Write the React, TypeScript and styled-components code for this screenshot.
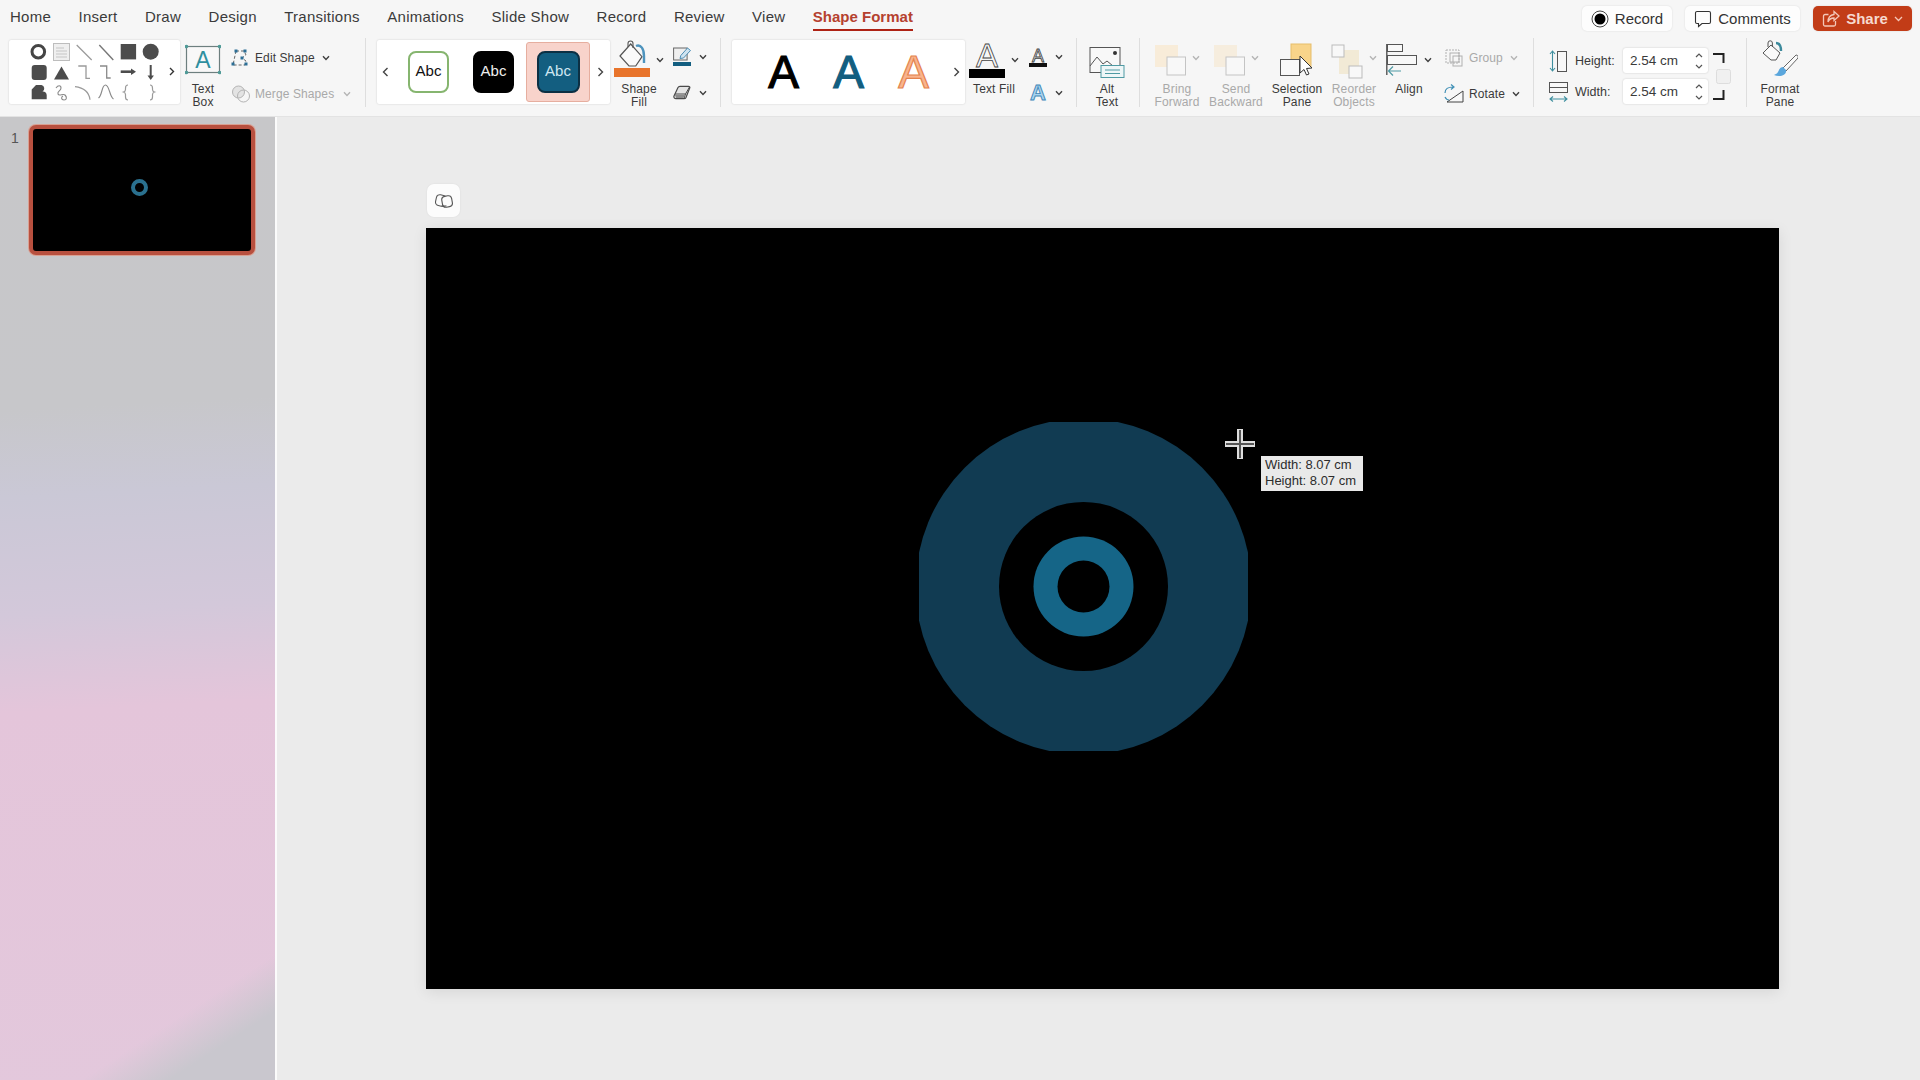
import React from 'react';
import styled, { createGlobalStyle } from 'styled-components';

const GlobalStyle = createGlobalStyle`
  html, body {
    margin: 0;
    padding: 0;
    background: #ebebeb;
  }
  body {
    font-family: "Liberation Sans", Arial, sans-serif;
    color: #3a3a3a;
  }
`;

const Page = styled.div`
  width: 1920px;
  height: 1080px;
  display: flex;
  flex-direction: column;
  overflow: hidden;
`;

const Ribbon = styled.header`
  height: 116px;
  flex: none;
  background: #f6f6f6;
  border-bottom: 1px solid #e3e3e3;
`;

const TopBar = styled.div`
  height: 36px;
  display: flex;
  align-items: flex-start;
  padding: 0 8px 0 10px;
`;

const Tabs = styled.nav`
  display: flex;
  gap: 27.5px;
`;

const Tab = styled.div<{ $active?: boolean }>`
  padding: 8px 0 4px;
  line-height: 17px;
  font-size: 15px;
  letter-spacing: ${p => (p.$active ? 0 : 0.25)}px;
  font-weight: ${p => (p.$active ? 700 : 400)};
  color: ${p => (p.$active ? '#b5412f' : '#3b3b3b')};
  border-bottom: 2px solid ${p => (p.$active ? '#ae2214' : 'transparent')};
`;

const TopActions = styled.div`
  margin-left: auto;
  margin-top: 6px;
  display: flex;
  gap: 13px;
`;

const ActionButton = styled.div<{ $width: number; $primary?: boolean }>`
  width: ${p => p.$width}px;
  height: 25px;
  box-sizing: border-box;
  display: flex;
  align-items: center;
  justify-content: center;
  gap: 6px;
  font-size: 15px;
  border-radius: 5px;
  color: ${p => (p.$primary ? '#f6d9cf' : '#333')};
  background: ${p => (p.$primary ? '#c23c17' : '#fdfdfd')};
  box-shadow: 0 0 2px rgba(0, 0, 0, 0.12);
`;

const Strip = styled.div`
  height: 80px;
  display: flex;
  align-items: flex-start;
  padding: 4px 0 0 9px;
`;

const Gallery = styled.div<{ $width: number; $left?: number }>`
  width: ${p => p.$width}px;
  height: 64px;
  flex: none;
  display: flex;
  align-items: center;
  margin-left: ${p => p.$left ?? 0}px;
  background: #fff;
  border-radius: 2px;
  box-shadow: 0 0 2px rgba(0, 0, 0, 0.18);
`;

const Divider = styled.div<{ $left: number }>`
  width: 1px;
  height: 69px;
  flex: none;
  margin: -2px 0 0 ${p => p.$left}px;
  background: #dedede;
`;

const BigTool = styled.div<{ $width: number; $left?: number }>`
  width: ${p => p.$width}px;
  flex: none;
  margin-left: ${p => p.$left ?? 0}px;
  display: flex;
  flex-direction: column;
  align-items: center;
`;

const BigIconRow = styled.div`
  height: 43px;
  display: flex;
  align-items: flex-start;
  gap: 6px;
`;

const ToolLabel = styled.div<{ $off?: boolean }>`
  font-size: 12px;
  line-height: 13px;
  letter-spacing: 0.15px;
  text-align: center;
  white-space: nowrap;
  color: ${p => (p.$off ? '#a9a9a9' : '#3a3a3a')};
`;

const SmallColumn = styled.div<{ $width: number; $left: number; $top?: number }>`
  width: ${p => p.$width}px;
  flex: none;
  margin: ${p => p.$top ?? 0}px 0 0 ${p => p.$left}px;
  display: flex;
  flex-direction: column;
  gap: 2px;
`;

const SmallRow = styled.div<{ $gap?: number; $off?: boolean }>`
  height: 34px;
  display: flex;
  align-items: center;
  gap: ${p => p.$gap ?? 8}px;
  font-size: 12px;
  letter-spacing: 0.1px;
  white-space: nowrap;
  color: ${p => (p.$off ? '#a9a9a9' : '#3a3a3a')};
`;

const ChevronMark = styled.svg<{ $top?: number; $left?: number }>`
  flex: none;
  margin-top: ${p => p.$top ?? 0}px;
  margin-left: ${p => p.$left ?? 0}px;
`;

const NavGlyph = styled.div<{ $width: number }>`
  width: ${p => p.$width}px;
  flex: none;
  display: flex;
  justify-content: center;
`;

const StyleCell = styled.div<{ $selected?: boolean; $width: number; $left?: number }>`
  width: ${p => p.$width}px;
  height: 60px;
  flex: none;
  box-sizing: border-box;
  margin-left: ${p => p.$left ?? 0}px;
  display: flex;
  align-items: center;
  justify-content: center;
  border-radius: 3px;
  background: ${p => (p.$selected ? '#f8d3cb' : 'transparent')};
  border: 1px solid ${p => (p.$selected ? '#e6ae9f' : 'transparent')};
`;

const Swatch = styled.div<{ $bg: string; $edge: string; $fg: string }>`
  width: 43px;
  height: 42px;
  box-sizing: border-box;
  padding-bottom: 3px;
  display: flex;
  align-items: center;
  justify-content: center;
  font-size: 15px;
  border-radius: 8px;
  background: ${p => p.$bg};
  border: 2px solid ${p => p.$edge};
  color: ${p => p.$fg};
`;

const WordArtRow = styled.div`
  display: grid;
  grid-template-columns: repeat(3, 65px);
  margin-left: 19px;
`;

const WordArtLetter = styled.div<{ $fill: string; $edge: string }>`
  text-align: center;
  font-size: 46px;
  line-height: 50px;
  color: ${p => p.$fill};
  -webkit-text-stroke: 1.2px ${p => p.$edge};
`;

const TextFillGlyph = styled.div`
  width: 36px;
  display: flex;
  flex-direction: column;
  align-items: center;
`;

const ThinLetter = styled.span`
  height: 29px;
  font-size: 33px;
  line-height: 31px;
  color: #f6f6f6;
  -webkit-text-stroke: 0.8px #444;
`;

const ColorBar = styled.div<{ $height: number; $color: string; $width: number }>`
  width: ${p => p.$width}px;
  height: ${p => p.$height}px;
  flex: none;
  background: ${p => p.$color};
`;

const SmallGlyph = styled.div`
  width: 18px;
  flex: none;
  display: flex;
  flex-direction: column;
  align-items: center;
`;

const OutlineLetter = styled.span`
  height: 15px;
  font-size: 18px;
  line-height: 16px;
  color: #e8e8e8;
  -webkit-text-stroke: 0.8px #444;
`;

const EffectLetter = styled.span`
  width: 18px;
  flex: none;
  text-align: center;
  font-size: 22px;
  font-weight: 700;
  line-height: 20px;
  color: #a9d3ee;
  -webkit-text-stroke: 0.9px #3f87b8;
`;

const SizeColumn = styled.div`
  margin: 8px 0 0 15px;
  flex: none;
  display: flex;
  flex-direction: column;
  gap: 6px;
`;

const SizeRow = styled.div`
  height: 25px;
  display: flex;
  align-items: center;
  font-size: 12.5px;
`;

const SizeIcon = styled.svg`
  flex: none;
  margin-right: 7px;
`;

const SizeLabel = styled.span`
  width: 48px;
  flex: none;
`;

const SizeInput = styled.div`
  width: 85px;
  height: 25px;
  flex: none;
  box-sizing: border-box;
  padding: 0 5px 0 7px;
  display: flex;
  align-items: center;
  justify-content: space-between;
  font-size: 13.5px;
  background: #fff;
  border-radius: 3px;
  box-shadow: 0 0 2px rgba(0, 0, 0, 0.2);
`;

const AspectLock = styled.svg`
  flex: none;
  margin: 13px 0 0 5px;
`;

const Workspace = styled.main`
  flex: 1;
  display: flex;
  min-height: 0;
`;

const Sidebar = styled.aside`
  width: 275px;
  flex: none;
  box-sizing: border-box;
  padding: 8px 0 0 11px;
  display: flex;
  align-items: flex-start;
  gap: 14px;
  font-size: 14px;
  color: #555;
  background:
    linear-gradient(147deg, transparent 89%, #c9c7ce 94%),
    linear-gradient(177deg, #c7c7c9 0, #c7c7ca 30%, #cac8d6 39%, #d3c8da 51%, #e4c5da 61%, #e3c8dc 100%);
`;

const SlideNumber = styled.span`
  margin-top: 5px;
  width: 4px;
`;

const Thumbnail = styled.div`
  position: relative;
  width: 226px;
  height: 130px;
  flex: none;
  box-sizing: border-box;
  background: #000;
  border: 4px solid #b8503f;
  border-radius: 7px;
  box-shadow: 0 0 0 1px #d9a092;
`;

const ThumbRing = styled.div`
  position: absolute;
  left: 98px;
  top: 50px;
  width: 17px;
  height: 17px;
  box-sizing: border-box;
  border: 4px solid #2a708e;
  border-radius: 50%;
`;

const Splitter = styled.div`
  width: 2px;
  flex: none;
  background: #fbfbfb;
`;

const Canvas = styled.section`
  flex: 1;
  padding: 67px 0 0 149px;
  background: #ebebeb;
`;

const CopilotButton = styled.div`
  width: 33px;
  height: 33px;
  margin: 0 0 11px 1px;
  display: flex;
  align-items: center;
  justify-content: center;
  background: #fcfcfc;
  border-radius: 7px;
  box-shadow: 0 0 2px rgba(0, 0, 0, 0.08);
`;

const Slide = styled.div`
  position: relative;
  width: 1353px;
  height: 761px;
  background: #000;
  box-shadow: 0 3px 14px rgba(0, 0, 0, 0.09);
`;

const Target = styled.svg`
  position: absolute;
  left: 493px;
  top: 194px;
`;

const Crosshair = styled.svg`
  position: absolute;
  left: 798px;
  top: 200px;
`;

const SizeTip = styled.div`
  position: absolute;
  left: 835px;
  top: 228px;
  width: 102px;
  height: 35px;
  box-sizing: border-box;
  padding: 1px 0 0 4px;
  font-size: 13px;
  line-height: 16px;
  color: #2c2c2c;
  white-space: nowrap;
  background: #e9e9e9;
`;

const Chevron = ({ off, top, left }: { off?: boolean; top?: number; left?: number }) => (
  <ChevronMark width='8' height='6' viewBox='0 0 8 6' $top={top} $left={left}>
    <path d='M1 1.2 4 4.4 7 1.2' fill='none' stroke={off ? '#b5b5b5' : '#3f3f3f'} strokeWidth='1.4' />
  </ChevronMark>
);

const NavArrow = ({ left }: { left?: boolean }) => (
  <svg width='7' height='10' viewBox='0 0 7 10'>
    <path d={left ? 'M5.5 1 1.5 5l4 4' : 'M1.5 1l4 4-4 4'} fill='none' stroke='#444' strokeWidth='1.4' />
  </svg>
);

const ShapesIcon = () => (
  <svg width='171' height='64' viewBox='0 0 171 64'>
    <circle cx='29.3' cy='11.7' r='6.3' fill='none' stroke='#454545' strokeWidth='3' />
    <rect x='44.5' y='3.5' width='16' height='17' fill='#efefef' stroke='#bdbdbd' />
    <path d='M47 8h8M47 11h11M47 14h11M47 17h11' stroke='#c5c5c5' />
    <path d='M67.7 5l15 15' stroke='#9a9a9a' strokeWidth='1.2' />
    <path d='M90.3 5l14 15' stroke='#777' strokeWidth='1.4' />
    <rect x='111.7' y='4' width='15.4' height='15.4' fill='#4c4c4c' />
    <circle cx='141.7' cy='11.7' r='8' fill='#4c4c4c' />
    <rect x='22.7' y='25' width='15' height='15' rx='3' fill='#4c4c4c' />
    <path d='M45 39.5h15L52.5 26.5z' fill='#4c4c4c' />
    <path d='M69.3 26H77v12.3h4' fill='none' stroke='#9a9a9a' strokeWidth='1.3' />
    <path d='M91 26h6.7v12h4' fill='none' stroke='#8a8a8a' strokeWidth='1.3' />
    <path d='M111.7 31.7h11' stroke='#4c4c4c' strokeWidth='2.6' />
    <path d='M122 28.5l5 3.2-5 3.2z' fill='#4c4c4c' />
    <path d='M141.7 25v11' stroke='#4c4c4c' strokeWidth='2' />
    <path d='M138.5 35.5h6.4l-3.2 4.5z' fill='#4c4c4c' />
    <path d='M22.7 49.5l4.3-4.5h5.5a3.6 3.6 0 0 1 1 6.6 3.6 3.6 0 0 1 4.2 3.4v4.3h-15z' fill='#4c4c4c' />
    <path d='M47 48c2-3 5-3 5 0s-4 3-3 6 5-1 7 1 2 5-1 5-3-3-1-4' fill='none' stroke='#888' strokeWidth='1.1' />
    <path d='M66 46.7c8 1 14 5 15 13' fill='none' stroke='#9a9a9a' strokeWidth='1.2' />
    <path d='M89.5 58c4-3 3-13 7-13s4 12 8 14' fill='none' stroke='#8a8a8a' strokeWidth='1.2' />
    <path d='M119 45c-2 0-2.500 1-2.500 3v1.500c0 1.500-.5 2-2 2.500 1.500.5 2 1 2 2.500V57c0 2 .5 3 2.500 3' fill='none' stroke='#9a9a9a' strokeWidth='1.2' />
    <path d='M141 45c2 0 2.500 1 2.500 3v1.500c0 1.500.5 2 2 2.500-1.500.5-2 1-2 2.500V57c0 2-.5 3-2.500 3' fill='none' stroke='#9a9a9a' strokeWidth='1.2' />
    <path d='M161 28l3.500 3.500-3.500 3.500' fill='none' stroke='#333' strokeWidth='1.4' />
  </svg>
);

const TextBoxIcon = () => (
  <svg width='36' height='42' viewBox='0 0 36 42'>
    <rect x='1.500' y='6.500' width='33' height='26' fill='#f8f8f8' stroke='#6d7f7f' strokeWidth='1.2' />
    {[[1.5, 6.5], [34.5, 6.5], [1.5, 32.5], [34.5, 32.5]].map(([x, y]) => (
      <circle key={`${x}-${y}`} cx={x} cy={y} r='1.8' fill='#4f9a97' />
    ))}
    <text x='18' y='28' textAnchor='middle' fontSize='23' fill='#2f8f9f' fontFamily='Liberation Sans'>
      A
    </text>
  </svg>
);

const EditShapeIcon = () => (
  <svg width='20' height='18' viewBox='0 0 20 18'>
    <path d='M5 2h8l2 4-4 3 4 3-1 4H2z' fill='none' stroke='#666' strokeDasharray='3 2' />
    {[[5, 2], [14, 2], [2, 15], [15, 15], [11, 9]].map(([x, y]) => (
      <rect key={`${x}-${y}`} x={x - 1.5} y={y - 1.5} width='3' height='3' fill='#2c6f96' />
    ))}
  </svg>
);

const MergeIcon = () => (
  <svg width='20' height='20' viewBox='0 0 20 20'>
    <circle cx='7.500' cy='8' r='6' fill='#e3e3e3' stroke='#b3b3b3' />
    <circle cx='12.500' cy='12' r='6' fill='none' stroke='#b3b3b3' />
  </svg>
);

const ShapeFillIcon = () => (
  <svg width='36' height='42' viewBox='0 0 36 42'>
    <path d='M6 16 16.700 4 28 16.700 21.700 26H15z' fill='#fafafa' stroke='#555' strokeWidth='1.2' />
    <path d='M14 7V3.500a2.500 2.500 0 0 1 5 0V8' fill='none' stroke='#555' strokeWidth='1.1' />
    <path d='M22 6c5-2 8 3 8 10v7' fill='none' stroke='#4d93bd' strokeWidth='2.400' />
    <rect y='28' width='36' height='9' fill='#e8742b' />
  </svg>
);

const OutlineIcon = () => (
  <svg width='18' height='20' viewBox='0 0 18 20'>
    <rect x='.6' y='1' width='13.500' height='12' fill='#efefef' stroke='#666' />
    <path d='M7 11.500l.8-3L14.500 1l3 2.500-7 7.500z' fill='#cfe3f0' stroke='#4d8eb5' />
    <rect y='15' width='18' height='4' fill='#135e80' />
  </svg>
);

const EffectsIcon = () => (
  <svg width='18' height='18' viewBox='0 0 18 18'>
    <path d='M1 12 5 3.500c.4-.9 1-1.200 2-1.200h8.500c1 0 1.600.8 1.200 1.700L13 13.500c-.4.900-1 1.200-2 1.200H3c-1.500 0-2.500-1.200-2-2.700z' fill='#e4e4e4' stroke='#4a4a4a' strokeWidth='1.200' />
    <path d='M2 10h10.500l4-7M12.500 10 11 14.500' fill='none' stroke='#4a4a4a' />
    <path d='M2 11h10l-1.500 3H3z' fill='#8c8c8c' />
  </svg>
);

const TextFillIcon = () => (
  <TextFillGlyph>
    <ThinLetter>A</ThinLetter>
    <ColorBar $width={36} $height={9} $color='#000' />
  </TextFillGlyph>
);

const TextOutlineIcon = () => (
  <SmallGlyph>
    <OutlineLetter>A</OutlineLetter>
    <ColorBar $width={18} $height={4} $color='#111' />
  </SmallGlyph>
);

const AltTextIcon = () => (
  <svg width='36' height='42' viewBox='0 0 36 42'>
    <rect x='1' y='7.500' width='30' height='25' fill='#f8f8f8' stroke='#555' />
    <path d='M1 26l7-9 6 7 4-3 6 5' fill='none' stroke='#555' />
    <circle cx='26' cy='13' r='2' fill='#333' />
    <rect x='12' y='25.500' width='23' height='12' fill='#eef6f7' stroke='#4f9aa3' />
    <path d='M16 30h15M16 33.500h15' stroke='#4f9aa3' />
  </svg>
);

const OrderIcon = ({ back, front, line }: { back: string; front: string; line: string }) => (
  <svg width='32' height='42' viewBox='0 0 32 42'>
    <rect x='1' y='5' width='23' height='22' fill={back} />
    <rect x='13' y='17' width='18.500' height='18' fill={front} stroke={line} />
  </svg>
);

const SelectionIcon = () => (
  <svg width='36' height='42' viewBox='0 0 36 42'>
    <rect x='12' y='4' width='20' height='23' fill='#f8d48a' stroke='#e6bd6a' />
    <rect x='1.500' y='19.500' width='19' height='16' fill='#f8f8f8' stroke='#555' />
    <path d='M21 16v17l4-3.500 2.500 5.500 2.500-1-2.500-5.500 5.500-.5z' fill='#fff' stroke='#333' />
  </svg>
);

const ReorderIcon = () => (
  <svg width='32' height='42' viewBox='0 0 32 42'>
    <rect x='8' y='10' width='20' height='24' fill='#f2ead6' />
    <rect x='1' y='5' width='12' height='12' fill='#f8f8f8' stroke='#bbb' />
    <rect x='18' y='26' width='13' height='12' fill='#f8f8f8' stroke='#bbb' />
  </svg>
);

const AlignIcon = () => (
  <svg width='32' height='42' viewBox='0 0 32 42'>
    <path d='M.8 4v31' stroke='#555' strokeWidth='1.4' />
    <rect x='1.500' y='4.500' width='15' height='7' fill='#f8f8f8' stroke='#555' />
    <rect x='1.500' y='15.500' width='29' height='9' fill='#f8f8f8' stroke='#555' />
    <path d='M15 31H3M7 26.500 2.500 31 7 35.500' fill='none' stroke='#4f9aa3' strokeWidth='1.2' />
  </svg>
);

const GroupIcon = () => (
  <svg width='20' height='20' viewBox='0 0 20 20'>
    <rect x='2' y='2' width='13' height='13' fill='none' stroke='#b0b0b0' strokeDasharray='2 1' />
    <rect x='6' y='5' width='9' height='9' fill='none' stroke='#b0b0b0' />
    <rect x='9' y='8' width='9' height='10' fill='none' stroke='#b0b0b0' />
  </svg>
);

const RotateIcon = () => (
  <svg width='20' height='20' viewBox='0 0 20 20'>
    <path d='M3 18 19 7v11z' fill='#f8f8f8' stroke='#444' />
    <path d='M1 9c0-4 3-6 8-6M7 .5 10 3 7 5.500' fill='none' stroke='#3f8fb5' strokeWidth='1.200' />
    <path d='M1 13c1 2 2 3 4 3' fill='none' stroke='#3f8fb5' strokeWidth='1.200' />
  </svg>
);

const FormatPaneIcon = () => (
  <svg width='36' height='42' viewBox='0 0 36 42'>
    <path d='M1 13 9 5l9 8-4 7H9z' fill='#fafafa' stroke='#555' />
    <path d='M6 7V3a2.200 2.200 0 0 1 4.400 0v4' fill='none' stroke='#555' />
    <path d='M14 3c4 0 5 4 5 8' fill='none' stroke='#3c8a9c' strokeWidth='2.400' />
    <path d='M34 15 21 28l3 3L36 18c.5-2-.5-3-2-3z' fill='#fafafa' stroke='#666' />
    <path d='M21 27c-3 0-4 3-5 5-1 2-3 2-4 3 5 2 13 1 12-5z' fill='#5aa6dc' />
  </svg>
);

const DoubleArrow = () => (
  <svg width='8' height='18' viewBox='0 0 8 18'>
    <path d='M1 5l3-3 3 3M1 13l3 3 3-3' fill='none' stroke='#555' strokeWidth='1.200' />
  </svg>
);

const HeightIcon = () => (
  <SizeIcon width='19' height='24' viewBox='0 0 19 24'>
    <rect x='8.500' y='2.500' width='9' height='20' fill='#f8f8f8' stroke='#555' />
    <path d='M3.500 2v20M1 5l2.500-3L6 5M1 19l2.500 3L6 19' fill='none' stroke='#3f8f9f' strokeWidth='1.100' />
  </SizeIcon>
);

const WidthIcon = () => (
  <SizeIcon width='19' height='24' viewBox='0 0 19 24'>
    <rect x='.5' y='2.500' width='18' height='10' fill='#f8f8f8' stroke='#555' />
    <path d='M.5 7.500h18' stroke='#555' />
    <path d='M1 19h17M4 16.500 1 19l3 2.500M15 16.500l3 2.500-3 2.500' fill='none' stroke='#3f8f9f' strokeWidth='1.100' />
  </SizeIcon>
);

const CommentIcon = () => (
  <svg width='18' height='18' viewBox='0 0 18 18'>
    <path d='M3 1.500h12A1.500 1.500 0 0 1 16.500 3v9a1.500 1.500 0 0 1-1.500 1.500H8L4.500 16.500v-3H3A1.500 1.500 0 0 1 1.500 12V3A1.500 1.500 0 0 1 3 1.500z' fill='none' stroke='#333' strokeWidth='1.100' />
  </svg>
);

const ShareIcon = () => (
  <svg width='18' height='18' viewBox='0 0 18 18'>
    <path d='M13.500 11v3.500a1.500 1.500 0 0 1-1.500 1.500H3a1.500 1.500 0 0 1-1.500-1.500V6A1.500 1.500 0 0 1 3 4.500h3.500' fill='none' stroke='#f3c7b8' strokeWidth='1.300' />
    <path d='M12 1.500l5 4.500-5 4.500V8c-3.500 0-5 1.500-6 4 0-4 2-7 6-7.500z' fill='none' stroke='#f3c7b8' strokeWidth='1.300' />
  </svg>
);

const RecordIcon = () => (
  <svg width='18' height='18' viewBox='0 0 18 18'>
    <circle cx='9' cy='9' r='8' fill='#fff' stroke='#444' />
    <circle cx='9' cy='9' r='5.500' fill='#000' />
  </svg>
);

const CopilotIcon = () => (
  <svg width='18' height='18' viewBox='0 0 18 18'>
    <rect x='1' y='3' width='10' height='11' rx='3.500' fill='none' stroke='#555' strokeWidth='1.100' transform='rotate(12 6 8)' />
    <rect x='7' y='4' width='10' height='11' rx='3.500' fill='#fcfcfc' stroke='#555' strokeWidth='1.100' transform='rotate(-10 12 9)' />
    <path d='M6.500 14h5' stroke='#555' strokeWidth='1.100' />
  </svg>
);

const App: React.FC = () => {
  const tabs = ['Home', 'Insert', 'Draw', 'Design', 'Transitions', 'Animations', 'Slide Show', 'Record', 'Review', 'View'];

  return (
    <Page>
      <GlobalStyle />
      <Ribbon>
        <TopBar>
          <Tabs>
            {tabs.map(tab => (
              <Tab key={tab}>{tab}</Tab>
            ))}
            <Tab $active>Shape Format</Tab>
          </Tabs>
          <TopActions>
            <ActionButton $width={90}>
              <RecordIcon />
              Record
            </ActionButton>
            <ActionButton $width={115}>
              <CommentIcon />
              Comments
            </ActionButton>
            <ActionButton $width={99} $primary>
              <ShareIcon />
              <b>Share</b>
              <svg width='9' height='6' viewBox='0 0 9 6'>
                <path d='M1 1l3.500 3.500L8 1' fill='none' stroke='#f3c7b8' strokeWidth='1.300' />
              </svg>
            </ActionButton>
          </TopActions>
        </TopBar>

        <Strip>
          <Gallery $width={171}>
            <ShapesIcon />
          </Gallery>
          <BigTool $width={46}>
            <BigIconRow>
              <TextBoxIcon />
            </BigIconRow>
            <ToolLabel>
              Text
              <br />
              Box
            </ToolLabel>
          </BigTool>
          <SmallColumn $width={125} $left={5} $top={1}>
            <SmallRow $gap={4}>
              <EditShapeIcon />
              Edit Shape
              <Chevron left={3} />
            </SmallRow>
            <SmallRow $gap={4} $off>
              <MergeIcon />
              Merge Shapes
              <Chevron off left={5} />
            </SmallRow>
          </SmallColumn>
          <Divider $left={9} />

          <Gallery $width={233} $left={11}>
            <NavGlyph $width={16}>
              <NavArrow left />
            </NavGlyph>
            <StyleCell $width={43} $left={14}>
              <Swatch $bg='#fff' $edge='#86b56f' $fg='#111'>
                Abc
              </Swatch>
            </StyleCell>
            <StyleCell $width={43} $left={22}>
              <Swatch $bg='#000' $edge='#000' $fg='#eee'>
                Abc
              </Swatch>
            </StyleCell>
            <StyleCell $width={64} $left={11} $selected>
              <Swatch $bg='#135e80' $edge='#0c3044' $fg='#cfe8f2'>
                Abc
              </Swatch>
            </StyleCell>
            <NavGlyph $width={20}>
              <NavArrow />
            </NavGlyph>
          </Gallery>
          <BigTool $width={58}>
            <BigIconRow>
              <ShapeFillIcon />
              <Chevron top={17} />
            </BigIconRow>
            <ToolLabel>
              Shape
              <br />
              Fill
            </ToolLabel>
          </BigTool>
          <SmallColumn $width={36} $left={5}>
            <SmallRow>
              <OutlineIcon />
              <Chevron />
            </SmallRow>
            <SmallRow>
              <EffectsIcon />
              <Chevron />
            </SmallRow>
          </SmallColumn>
          <Divider $left={11} />

          <Gallery $width={233} $left={11}>
            <WordArtRow>
              <WordArtLetter $fill='#000' $edge='#000'>
                A
              </WordArtLetter>
              <WordArtLetter $fill='#125e80' $edge='#125e80'>
                A
              </WordArtLetter>
              <WordArtLetter $fill='#f9b48d' $edge='#e4834e'>
                A
              </WordArtLetter>
            </WordArtRow>
            <NavGlyph $width={20}>
              <NavArrow />
            </NavGlyph>
          </Gallery>
          <BigTool $width={58}>
            <BigIconRow>
              <TextFillIcon />
              <Chevron top={17} />
            </BigIconRow>
            <ToolLabel>Text Fill</ToolLabel>
          </BigTool>
          <SmallColumn $width={36} $left={6}>
            <SmallRow>
              <TextOutlineIcon />
              <Chevron />
            </SmallRow>
            <SmallRow>
              <EffectLetter>A</EffectLetter>
              <Chevron />
            </SmallRow>
          </SmallColumn>
          <Divider $left={11} />

          <BigTool $width={60}>
            <BigIconRow>
              <AltTextIcon />
            </BigIconRow>
            <ToolLabel>
              Alt
              <br />
              Text
            </ToolLabel>
          </BigTool>
          <Divider $left={2} />

          <BigTool $width={62} $left={6}>
            <BigIconRow>
              <OrderIcon back='#f8ecd9' front='#f8f8f8' line='#c4c4c4' />
              <Chevron off top={15} />
            </BigIconRow>
            <ToolLabel $off>
              Bring
              <br />
              Forward
            </ToolLabel>
          </BigTool>
          <BigTool $width={56}>
            <BigIconRow>
              <OrderIcon back='#f6edde' front='#f8f8f8' line='#c4c4c4' />
              <Chevron off top={15} />
            </BigIconRow>
            <ToolLabel $off>
              Send
              <br />
              Backward
            </ToolLabel>
          </BigTool>
          <BigTool $width={66}>
            <BigIconRow>
              <SelectionIcon />
            </BigIconRow>
            <ToolLabel>
              Selection
              <br />
              Pane
            </ToolLabel>
          </BigTool>
          <BigTool $width={48}>
            <BigIconRow>
              <ReorderIcon />
              <Chevron off top={15} />
            </BigIconRow>
            <ToolLabel $off>
              Reorder
              <br />
              Objects
            </ToolLabel>
          </BigTool>
          <BigTool $width={62}>
            <BigIconRow>
              <AlignIcon />
              <Chevron top={17} />
            </BigIconRow>
            <ToolLabel>Align</ToolLabel>
          </BigTool>
          <SmallColumn $width={80} $left={4} $top={1}>
            <SmallRow $gap={5} $off>
              <GroupIcon />
              Group
              <Chevron off left={2} />
            </SmallRow>
            <SmallRow $gap={5}>
              <RotateIcon />
              Rotate
              <Chevron left={2} />
            </SmallRow>
          </SmallColumn>
          <Divider $left={9} />

          <SizeColumn>
            <SizeRow>
              <HeightIcon />
              <SizeLabel>Height:</SizeLabel>
              <SizeInput>
                2.54 cm
                <DoubleArrow />
              </SizeInput>
            </SizeRow>
            <SizeRow>
              <WidthIcon />
              <SizeLabel>Width:</SizeLabel>
              <SizeInput>
                2.54 cm
                <DoubleArrow />
              </SizeInput>
            </SizeRow>
          </SizeColumn>
          <AspectLock width='18' height='48' viewBox='0 0 18 48'>
            <path d='M0 1h10.500v9' fill='none' stroke='#222' strokeWidth='2' />
            <rect x='3.500' y='16.500' width='14' height='14' rx='2' fill='#f0f0f0' stroke='#ddd' />
            <path d='M0 46h10.500v-9' fill='none' stroke='#222' strokeWidth='2' />
          </AspectLock>
          <Divider $left={15} />

          <BigTool $width={66}>
            <BigIconRow>
              <FormatPaneIcon />
            </BigIconRow>
            <ToolLabel>
              Format
              <br />
              Pane
            </ToolLabel>
          </BigTool>
        </Strip>
      </Ribbon>

      <Workspace>
        <Sidebar>
          <SlideNumber>1</SlideNumber>
          <Thumbnail>
            <ThumbRing />
          </Thumbnail>
        </Sidebar>
        <Splitter />
        <Canvas>
          <CopilotButton>
            <CopilotIcon />
          </CopilotButton>
          <Slide>
            <Target width='329' height='329' viewBox='0 0 329 329'>
              <circle cx='164.500' cy='164.500' r='168' fill='#113b52' />
              <circle cx='164.500' cy='164.500' r='84.500' fill='#000' />
              <circle cx='164.500' cy='164.500' r='50' fill='#156587' />
              <circle cx='164.500' cy='164.500' r='26' fill='#000' />
            </Target>
            <Crosshair width='32' height='32' viewBox='0 0 32 32'>
              <path d='M16 1v30M1 16h30' stroke='#dedede' strokeWidth='6' />
              <path d='M16 2v28M2 16h28' stroke='#555' strokeWidth='2' />
            </Crosshair>
            <SizeTip>
              Width: 8.07 cm
              <br />
              Height: 8.07 cm
            </SizeTip>
          </Slide>
        </Canvas>
      </Workspace>
    </Page>
  );
};

export default App;
